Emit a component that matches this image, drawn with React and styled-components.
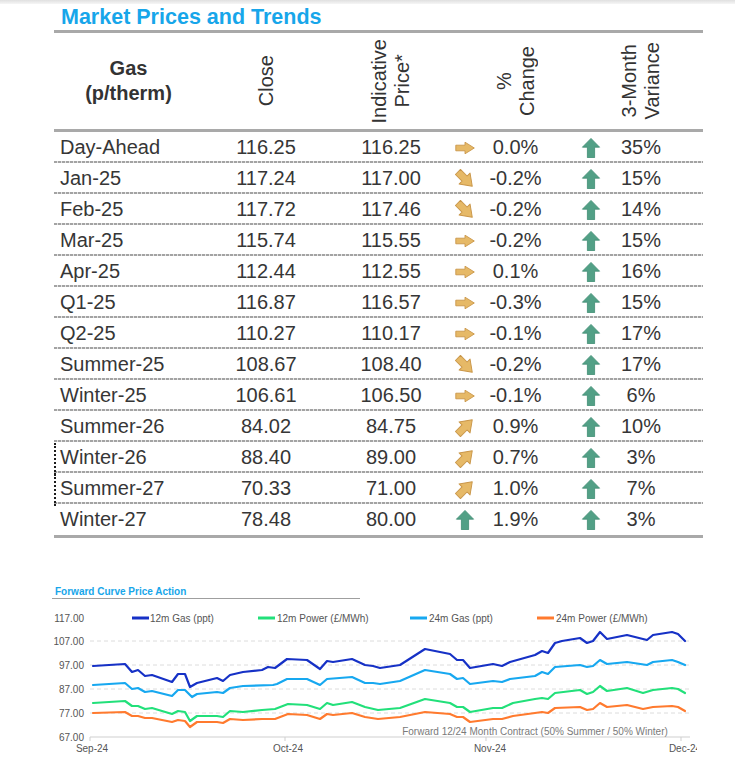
import React from "react";
import styled, { createGlobalStyle, css } from "styled-components";

const Global = createGlobalStyle`
  html, body { margin: 0; padding: 0; background: #fff; overflow: hidden; }
  body { font-family: "Liberation Sans", Arial, sans-serif; color: #333; }
`;

const Page = styled.div`
  width: 735px;
  height: 759px;
  display: flex;
  flex-direction: column;
`;

const TopBand = styled.div`
  height: 4px;
  background: linear-gradient(#e0e0e0, #f6f6f6);
`;

const Content = styled.div`
  padding-left: 54px;
  width: 649px;
  display: flex;
  flex-direction: column;
`;

const Title = styled.h1`
  margin: 1px 0 1px;
  padding-left: 7px;
  font-size: 21.5px;
  line-height: 24px;
  font-weight: 700;
  color: #17a6ea;
`;

const Table = styled.div`
  border-top: 3px solid #a9a9a9;
  border-bottom: 3px solid #a9a9a9;
`;

const cols = css`
  display: grid;
  grid-template-columns: 137px 150px 100px 129px 133px;
`;

const HeaderRow = styled.div`
  ${cols};
  height: 96px;
  align-items: center;
  border-bottom: 3px solid #a9a9a9;
`;

const HeaderCell = styled.div`
  display: flex;
  justify-content: center;
  align-items: center;
  height: 100%;
  padding-left: ${(p) => p.$pl || 0}px;
  padding-right: ${(p) => p.$pr || 0}px;
`;

const GasLabel = styled.div`
  font-size: 20px;
  line-height: 25px;
  font-weight: 700;
  text-align: center;
  color: #333;
`;

const VerticalLabel = styled.div`
  writing-mode: vertical-rl;
  transform: rotate(180deg);
  font-size: 20px;
  line-height: 23px;
  text-align: center;
  color: #333;
  white-space: nowrap;
`;

const Row = styled.div`
  ${cols};
  position: relative;
  height: 31px;
  align-items: center;
  font-size: 20px;
  line-height: 31px;
  color: #363636;
  background: ${(p) =>
    p.$last
      ? "none"
      : "repeating-linear-gradient(to right, #a3a3a3 0 3px, #e4e4e4 3px 4px) left bottom / 100% 2px no-repeat"};
  ${(p) =>
    p.$marked &&
    css`
      &::before {
        content: "";
        position: absolute;
        left: 0;
        top: 1px;
        bottom: -2px;
        border-left: 2px dotted #1c1c1c;
      }
    `}
`;

const NameCell = styled.div`
  padding-left: 6px;
  white-space: nowrap;
`;

const NumCell = styled.div`
  text-align: center;
`;

const IconCell = styled.div`
  display: flex;
  align-items: center;
  height: 31px;
`;

const IconSlot = styled.span`
  display: flex;
  width: 20px;
  height: 20px;
  margin-left: ${(p) => p.$ml}px;
  flex: none;
`;

const IconText = styled.span`
  flex: 1;
  text-align: center;
  padding-right: ${(p) => p.$pr}px;
`;

const ChartTitle = styled.div`
  margin: 48px 0 0 -2px;
  width: 305px;
  padding-left: 3px;
  font-size: 10px;
  line-height: 12px;
  font-weight: 700;
  color: #17a6ea;
  border-bottom: 1px solid #9f9f9f;
`;

const ChartSvg = styled.svg`
  display: block;
  width: 643px;
  height: 160px;
  font-family: "Liberation Sans", Arial, sans-serif;
`;

const GoldArrow = ({ rotate = 0 }) => {
  const diag = rotate !== 0;
  const d = diag
    ? "M0.5 6.6H9.4V2.6L19.8 10L9.4 17.4V13.4H0.5Z"
    : "M0.8 7.2H10V4.2L19.3 10L10 15.8V12.8H0.8Z";
  return (
    <svg width="20" height="20" viewBox="0 0 20 20" overflow="visible">
      <path
        d={d}
        transform={`rotate(${rotate} 10 10)${diag ? " translate(10 10) scale(1.05) translate(-10 -10)" : ""}`}
        fill="#e6b967"
        stroke="#c99649"
        strokeWidth="0.9"
        strokeLinejoin="round"
      />
    </svg>
  );
};

const GreenUp = () => (
  <svg width="20" height="20" viewBox="0 0 20 20">
    <path
      d="M10 0.4L18.6 9.2H13.6V19.7H6.4V9.2H1.4Z"
      fill="#52a086"
      stroke="#3f8b72"
      strokeWidth="0.8"
      strokeLinejoin="round"
    />
  </svg>
);

const TrendIcon = ({ kind }) => {
  if (kind === "right") return <GoldArrow rotate={0} />;
  if (kind === "down") return <GoldArrow rotate={45} />;
  if (kind === "upright") return <GoldArrow rotate={-45} />;
  return <GreenUp />;
};

const rows = [
  ["Day-Ahead", "116.25", "116.25", "right", "0.0%", "35%"],
  ["Jan-25", "117.24", "117.00", "down", "-0.2%", "15%"],
  ["Feb-25", "117.72", "117.46", "down", "-0.2%", "14%"],
  ["Mar-25", "115.74", "115.55", "right", "-0.2%", "15%"],
  ["Apr-25", "112.44", "112.55", "right", "0.1%", "16%"],
  ["Q1-25", "116.87", "116.57", "right", "-0.3%", "15%"],
  ["Q2-25", "110.27", "110.17", "right", "-0.1%", "17%"],
  ["Summer-25", "108.67", "108.40", "down", "-0.2%", "17%"],
  ["Winter-25", "106.61", "106.50", "right", "-0.1%", "6%"],
  ["Summer-26", "84.02", "84.75", "upright", "0.9%", "10%"],
  ["Winter-26", "88.40", "89.00", "upright", "0.7%", "3%", true],
  ["Summer-27", "70.33", "71.00", "upright", "1.0%", "7%", true],
  ["Winter-27", "78.48", "80.00", "up", "1.9%", "3%"],
];

const gas12 = [[93,666],[125,664],[132,672],[138,670],[145,676],[152,675],[172,682],[178,674],[185,674],[190,687],[197,683],[217,678],[223,681],[230,675],[243,672],[262,670],[268,667],[275,668],[287,659],[307,660],[320,669],[327,661],[333,662],[352,659],[365,665],[373,666],[380,668],[400,665],[425,649],[450,654],[457,660],[463,660],[470,668],[493,664],[502,666],[510,662],[535,655],[542,651],[548,653],[555,643],[562,641],[580,638],[587,643],[593,641],[600,632],[607,639],[627,635],[647,640],[653,635],[672,632],[678,634],[685,641]];
const gas24 = [[93,685],[125,683],[132,689],[138,688],[145,692],[152,691],[172,696],[178,690],[185,690],[192,697],[197,694],[217,692],[223,693],[230,688],[243,686],[273,685],[277,684],[287,679],[307,679],[320,685],[327,679],[352,677],[365,683],[373,683],[380,684],[400,681],[425,670],[450,674],[457,679],[463,678],[470,684],[493,681],[502,682],[510,679],[535,676],[542,672],[548,674],[555,667],[580,665],[587,667],[593,666],[600,660],[607,664],[627,662],[647,665],[653,662],[672,660],[678,662],[685,665]];
const power12 = [[93,703],[125,701],[132,706],[138,706],[145,709],[152,708],[172,714],[178,711],[185,712],[190,721],[197,716],[217,716],[223,717],[230,711],[243,712],[262,710],[275,709],[288,704],[307,705],[320,709],[327,703],[333,705],[352,702],[365,707],[378,710],[400,708],[425,699],[450,703],[457,707],[463,707],[470,712],[493,708],[502,708],[513,703],[535,699],[542,698],[548,699],[555,693],[580,690],[587,694],[593,692],[600,686],[607,691],[627,688],[643,693],[653,690],[672,688],[678,689],[685,693]];
const power24 = [[93,713],[125,712],[132,716],[138,716],[145,718],[152,718],[172,722],[178,720],[185,721],[190,727],[197,722],[217,722],[223,723],[230,719],[243,720],[262,719],[275,719],[288,714],[307,715],[320,719],[327,714],[333,715],[352,713],[365,717],[378,719],[400,717],[425,712],[450,714],[457,717],[463,717],[470,722],[493,719],[502,719],[513,716],[535,713],[542,712],[548,713],[555,708],[580,707],[587,710],[593,709],[600,703],[607,707],[627,705],[643,709],[653,707],[672,706],[678,707],[685,711]];

const pts = (a) => a.map((p) => p.join(",")).join(" ");

const yLabels = [
  ["117.00", 618],
  ["107.00", 641],
  ["97.00", 665],
  ["87.00", 689],
  ["77.00", 713],
  ["67.00", 737],
];

const xLabels = [
  ["Sep-24", 90, 92],
  ["Oct-24", 285, 288],
  ["Nov-24", 486, 490],
  ["Dec-24", 681, 685],
];

const legend = [
  ["12m Gas (ppt)", "#1631c6", 132, 150],
  ["12m Power (£/MWh)", "#22e07a", 258, 277],
  ["24m Gas (ppt)", "#17a8f0", 410, 429],
  ["24m Power (£/MWh)", "#ff7a2e", 537, 556],
];

const Chart = () => (
  <ChartSvg viewBox="54 599 643 160">
    {yLabels.map(([t, y]) => (
      <text key={t} x="84" y={y + 3.5} fontSize="10" fill="#555" textAnchor="end">
        {t}
      </text>
    ))}
    {[641, 665, 689, 713].map((y) => (
      <line key={y} x1="90" x2="690" y1={y} y2={y} stroke="#dcdcdc" strokeWidth="1" strokeDasharray="4 3" />
    ))}
    <line x1="90" x2="690" y1="737" y2="737" stroke="#cfcfcf" strokeWidth="1" />
    {xLabels.map(([t, tx, lx]) => (
      <g key={t}>
        <line x1={tx} x2={tx} y1="737" y2="741" stroke="#cfcfcf" strokeWidth="1" />
        <text x={lx} y="751.5" fontSize="10" fill="#555" textAnchor="middle">
          {t}
        </text>
      </g>
    ))}
    {legend.map(([t, c, sx, tx]) => (
      <g key={t}>
        <line x1={sx} x2={sx + 17} y1="618" y2="618" stroke={c} strokeWidth="3" />
        <text x={tx} y="621.5" fontSize="10" fill="#555">
          {t}
        </text>
      </g>
    ))}
    <text x="535" y="734.5" fontSize="10" fill="#7a7a7a" textAnchor="middle">
      Forward 12/24 Month Contract (50% Summer / 50% Winter)
    </text>
    <g fill="none" strokeWidth="2.2" strokeLinejoin="round" strokeLinecap="round">
      <polyline points={pts(power24)} stroke="#ff7a2e" />
      <polyline points={pts(power12)} stroke="#22e07a" />
      <polyline points={pts(gas24)} stroke="#17a8f0" />
      <polyline points={pts(gas12)} stroke="#1631c6" />
    </g>
  </ChartSvg>
);

export default function App() {
  return (
    <Page>
      <Global />
      <TopBand />
      <Content>
        <Title>Market Prices and Trends</Title>
        <Table>
          <HeaderRow>
            <HeaderCell $pl={12}>
              <GasLabel>
                Gas
                <br />
                (p/therm)
              </GasLabel>
            </HeaderCell>
            <HeaderCell>
              <VerticalLabel>Close</VerticalLabel>
            </HeaderCell>
            <HeaderCell>
              <VerticalLabel>
                Indicative
                <br />
                Price*
              </VerticalLabel>
            </HeaderCell>
            <HeaderCell $pl={20}>
              <VerticalLabel>
                %
                <br />
                Change
              </VerticalLabel>
            </HeaderCell>
            <HeaderCell $pl={9}>
              <VerticalLabel>
                3-Month
                <br />
                Variance
              </VerticalLabel>
            </HeaderCell>
          </HeaderRow>
          {rows.map(([name, close, ind, trend, pct, vari, marked], i) => (
            <Row key={name} $last={i === rows.length - 1} $marked={marked}>
              <NameCell>{name}</NameCell>
              <NumCell>{close}</NumCell>
              <NumCell>{ind}</NumCell>
              <IconCell>
                <IconSlot $ml={14}>
                  <TrendIcon kind={trend} />
                </IconSlot>
                <IconText $pr={14}>{pct}</IconText>
              </IconCell>
              <IconCell>
                <IconSlot $ml={11}>
                  <GreenUp />
                </IconSlot>
                <IconText $pr={22}>{vari}</IconText>
              </IconCell>
            </Row>
          ))}
        </Table>
        <ChartTitle>Forward Curve Price Action</ChartTitle>
        <Chart />
      </Content>
    </Page>
  );
}
